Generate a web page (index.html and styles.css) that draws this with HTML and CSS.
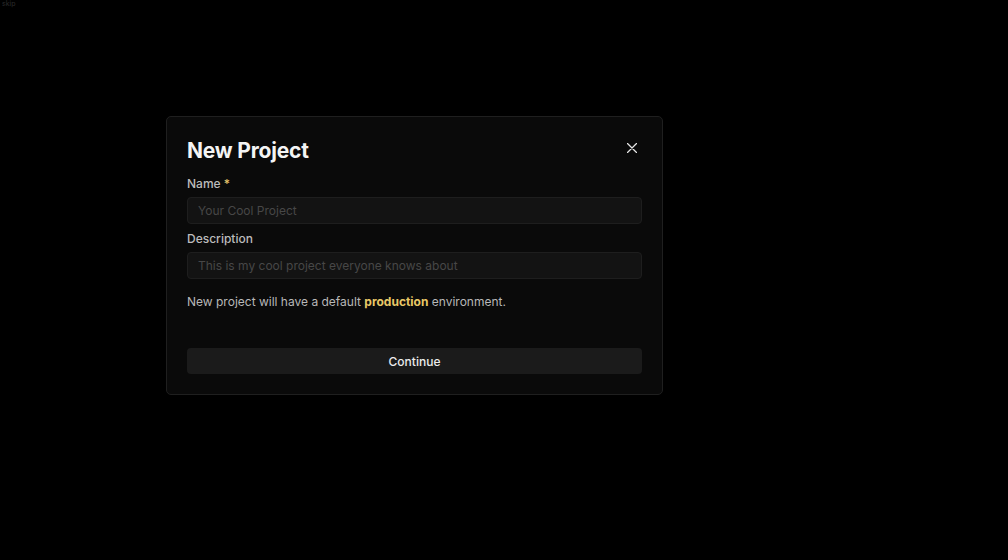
FILE: index.html
```html
<!doctype html>
<html lang="en">
  <head>
    <meta charset="UTF-8" />
    <meta name="viewport" content="width=device-width, initial-scale=1.0" />
    <title>New Project</title>
    <link rel="stylesheet" href="styles.css">
  </head>
  <body>
    <span class="corner">skip</span>
    <div class="modal">
      <div class="modal-head">
        <h2 class="title">New Project</h2>
        <button class="close" aria-label="Close">
          <svg width="10" height="10" viewBox="0 0 10 10">
            <path d="M0.5 0.5 L9.5 9.5 M9.5 0.5 L0.5 9.5" stroke="#e6e6e6" stroke-width="1.3" stroke-linecap="round" />
          </svg>
        </button>
      </div>

      <label class="label" for="name">Name <span class="req">*</span></label>
      <input class="input" id="name" type="text" placeholder="Your Cool Project" />

      <label class="label label-gap" for="desc">Description</label>
      <input class="input" id="desc" type="text" placeholder="This is my cool project everyone knows about" />

      <p class="note">New project will have a default <strong>production</strong> environment.</p>

      <button class="continue">Continue</button>
    </div>
  </body>
</html>
```

FILE: styles.css
```css
body {
  margin: 0;
  height: 100vh;
  background-color: #000;
  font-family: Inter, "Noto Sans", sans-serif;
  color: #b8b8b8;
}

.corner {
  position: absolute;
  top: 0;
  left: 2px;
  font-size: 7px;
  line-height: 8px;
  color: #2c2c2c;
}

.modal {
  box-sizing: border-box;
  width: 497px;
  margin: 0 0 0 166px;
  position: relative;
  top: 116px;
  padding: 20px 20px 20px;
  background-color: #0a0a0a;
  border: 1px solid #1f1f1f;
  border-radius: 5px;
}

.modal-head {
  display: flex;
  justify-content: space-between;
  align-items: flex-start;
}

.title {
  margin: 0;
  font-size: 21px;
  line-height: 28px;
  font-weight: 700;
  color: #f4f4f4;
  letter-spacing: -0.2px;
}

.close {
  width: 20px;
  height: 20px;
  margin-top: 1px;
  padding: 0;
  border: none;
  background: none;
  display: flex;
  justify-content: center;
  align-items: center;
  cursor: pointer;
}

.label {
  display: block;
  margin-top: 11px;
  margin-bottom: 5px;
  font-size: 12px;
  line-height: 16px;
  font-weight: 500;
  color: #bcbcbc;
}

.label-gap {
  margin-top: 7px;
}

.req {
  color: #e5c46a;
}

.input {
  box-sizing: border-box;
  display: block;
  width: 100%;
  height: 27px;
  padding: 0 10px;
  background-color: #131313;
  border: 1px solid #1e1e1e;
  border-radius: 4px;
  font-family: Inter, "Noto Sans", sans-serif;
  font-size: 12px;
  color: #ddd;
  outline: none;
}

.input::placeholder {
  color: #474747;
}

.note {
  margin: 15px 0 0;
  font-size: 12px;
  line-height: 16px;
  color: #b8b8b8;
}

.note strong {
  color: #e8c867;
  font-weight: 700;
}

.continue {
  display: block;
  width: 100%;
  height: 26px;
  margin-top: 38px;
  padding: 0;
  background-color: #1b1b1b;
  border: none;
  border-radius: 4px;
  font-family: Inter, "Noto Sans", sans-serif;
  font-size: 12px;
  font-weight: 500;
  color: #ececec;
  cursor: pointer;
}
```
